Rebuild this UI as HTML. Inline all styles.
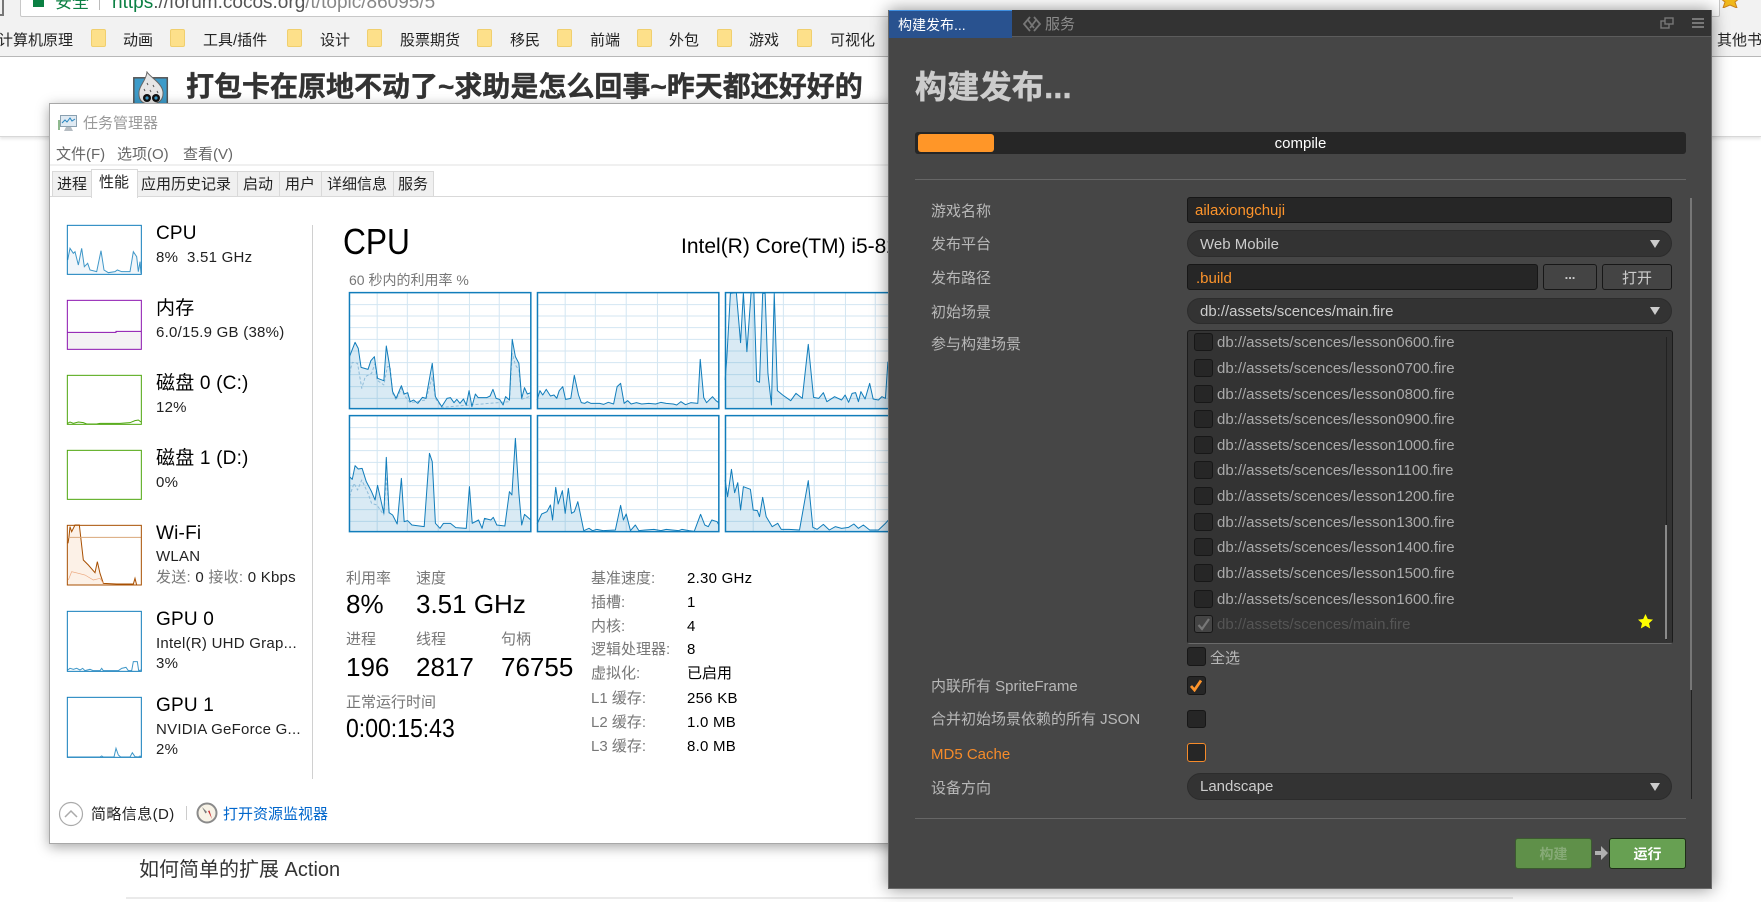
<!DOCTYPE html>
<html lang="zh">
<head>
<meta charset="utf-8">
<title>构建发布</title>
<style>
html,body{margin:0;padding:0;background:#fff;}
body{position:relative;width:1761px;height:902px;overflow:hidden;font-family:"Liberation Sans","Noto Sans CJK SC",sans-serif;}
.t{position:absolute;white-space:nowrap;line-height:20px;height:20px;font-size:15px;margin-top:1px;}
.b{position:absolute;box-sizing:border-box;}
.bm{color:#222;}
.fd{position:absolute;top:29px;width:15px;height:18px;background:#fde08a;border:1px solid #f0cf6e;border-radius:2px;box-sizing:border-box;}
.gr{color:#777;}
.bk{color:#000;}
.hd{font-size:19px;color:#000;letter-spacing:.2px;}
.sb{color:#222;letter-spacing:.25px;}
.lb{color:#b8b8b8;}
.inp{position:absolute;box-sizing:border-box;background:#262626;border:1px solid #171717;border-radius:3px;}
.sel{position:absolute;box-sizing:border-box;background:#333;border:1px solid #2c2c2c;border-radius:14px;left:1187px;width:485px;}
.arr{position:absolute;left:1650px;width:0;height:0;border-left:5px solid transparent;border-right:5px solid transparent;border-top:8px solid #ccc;}
.cb{position:absolute;box-sizing:border-box;width:19px;height:18px;background:#262626;border:1px solid #171717;border-radius:3px;}
.li{color:#aaa;left:1217px;}
</style>
</head>
<body>
<!-- browser chrome -->
<div class="b" style="left:0;top:0;width:1761px;height:57px;background:#f2f2f2;border-bottom:1px solid #b9b9b9;"></div>
<div class="b" style="left:20px;top:-4px;width:1700px;height:21px;background:#fff;border:1px solid #c8c8c8;border-radius:2px;"></div>
<div class="b" style="left:0;top:0;width:4px;height:16px;border-right:2px solid #777;border-bottom:2px solid #777;"></div>
<div class="b" style="left:33px;top:0;width:11px;height:7px;background:#0b8043;"></div>
<div class="t" style="left:55px;top:-8px;font-size:17px;color:#0b8043;">安全</div>
<div class="b" style="left:99px;top:0;width:1px;height:10px;background:#bbb;"></div>
<div class="t" style="left:112px;top:-8px;font-size:19px;"><span style="color:#0b8043;">https</span><span style="color:#555;">://forum.cocos.org</span><span style="color:#888;">/t/topic/86095/5</span></div>

<div class="t bm" style="left:-2px;top:30px;">计算机原理</div>
<div class="fd" style="left:91px;"></div><div class="t bm" style="left:123px;top:30px;">动画</div>
<div class="fd" style="left:170px;"></div><div class="t bm" style="left:203px;top:30px;">工具/插件</div>
<div class="fd" style="left:287px;"></div><div class="t bm" style="left:320px;top:30px;">设计</div>
<div class="fd" style="left:367px;"></div><div class="t bm" style="left:400px;top:30px;">股票期货</div>
<div class="fd" style="left:477px;"></div><div class="t bm" style="left:510px;top:30px;">移民</div>
<div class="fd" style="left:557px;"></div><div class="t bm" style="left:590px;top:30px;">前端</div>
<div class="fd" style="left:637px;"></div><div class="t bm" style="left:669px;top:30px;">外包</div>
<div class="fd" style="left:717px;"></div><div class="t bm" style="left:749px;top:30px;">游戏</div>
<div class="fd" style="left:797px;"></div><div class="t bm" style="left:830px;top:30px;">可视化</div>
<div class="t bm" style="left:1717px;top:30px;">其他书签</div>
<svg style="position:absolute;left:1718px;top:-8px" width="24" height="16" viewBox="0 0 24 16"><polygon points="12,0 15,5 22,6 17,10 19,16 12,13 5,16 7,10 2,6 9,5" fill="#f0b81a" stroke="#c9801e"/></svg>

<!-- forum header -->
<div class="b" style="left:0;top:57px;width:1761px;height:80px;background:#fff;border-bottom:1px solid #d8d8d8;box-shadow:0 2px 3px rgba(0,0,0,.1);"></div>
<svg style="position:absolute;left:133px;top:71px" width="36" height="33" viewBox="0 0 36 33">
<rect x="0.8" y="6.8" width="33.5" height="28" fill="#3d9bc9" stroke="#555" stroke-width="1.5"/>
<path d="M14 1 C17 6 29 12 30 21 C30.5 28 27 33 17 33 C8 33 5.5 28 6 21 C6.5 14 13 10 14 1Z" fill="#e6e6e6" stroke="#666"/>
<path d="M14 12l1 2M20 14l1 2M11 18l1 2M17 19l1 2M24 20l1 2" stroke="#555" stroke-width="1"/>
<circle cx="14" cy="27" r="4" fill="#111"/><circle cx="23" cy="27" r="4" fill="#111"/>
<circle cx="14" cy="27" r="1.6" fill="#3d9bc9"/><circle cx="23" cy="27" r="1.6" fill="#3d9bc9"/>
</svg>
<div class="t" style="left:186px;top:76px;font-size:28px;line-height:20px;font-weight:bold;color:#333;-webkit-text-stroke:.4px #333;">打包卡在原地不动了~求助是怎么回事~昨天都还好好的</div>

<!-- below -->
<div class="t" style="left:139px;top:859px;font-size:20px;color:#333;">如何简单的扩展 Action</div>
<div class="b" style="left:126px;top:897px;width:1387px;height:2px;background:#eaeaea;"></div>

<!-- task manager -->
<div class="b" style="left:49px;top:103px;width:900px;height:741px;background:#fff;border:1px solid #a8a8a8;box-shadow:0 3px 12px rgba(0,0,0,.35);"></div>
<svg style="position:absolute;left:58px;top:114px" width="20" height="18" viewBox="0 0 20 18">
<rect x="2.5" y="1.5" width="16" height="11" fill="#dfeaf3" stroke="#8aa0b0"/>
<path d="M4 9l3-3 2 2 3-4 2 3 3-2" fill="none" stroke="#2a86c0"/>
<rect x="0" y="6" width="2" height="10" fill="#8fb98f"/>
<path d="M8 13h5l2 4H6z" fill="#b5bcc2"/>
</svg>
<div class="t" style="left:83px;top:113px;color:#999;">任务管理器</div>
<div class="t" style="left:56px;top:144px;color:#666;">文件(F)</div>
<div class="t" style="left:117px;top:144px;color:#666;">选项(O)</div>
<div class="t" style="left:183px;top:144px;color:#666;">查看(V)</div>
<div class="b" style="left:50px;top:164px;width:840px;height:2px;background:#f0f0f0;"></div>
<div class="b" style="left:50px;top:196px;width:840px;height:1px;background:#d9d9d9;"></div>
<div class="b" style="left:52px;top:171px;width:40px;height:25px;background:#f0f0f0;border:1px solid #d9d9d9;border-bottom:0;"></div>
<div class="b" style="left:137px;top:171px;width:101px;height:25px;background:#f0f0f0;border:1px solid #d9d9d9;border-bottom:0;"></div>
<div class="b" style="left:237px;top:171px;width:43px;height:25px;background:#f0f0f0;border:1px solid #d9d9d9;border-bottom:0;"></div>
<div class="b" style="left:279px;top:171px;width:43px;height:25px;background:#f0f0f0;border:1px solid #d9d9d9;border-bottom:0;"></div>
<div class="b" style="left:321px;top:171px;width:73px;height:25px;background:#f0f0f0;border:1px solid #d9d9d9;border-bottom:0;"></div>
<div class="b" style="left:393px;top:171px;width:41px;height:25px;background:#f0f0f0;border:1px solid #d9d9d9;border-bottom:0;"></div>
<div class="b" style="left:91px;top:169px;width:47px;height:29px;background:#fff;border:1px solid #d9d9d9;border-bottom:0;"></div>
<div class="t" style="left:57px;top:174px;color:#222;">进程</div>
<div class="t" style="left:99px;top:172px;color:#222;">性能</div>
<div class="t" style="left:141px;top:174px;color:#222;">应用历史记录</div>
<div class="t" style="left:243px;top:174px;color:#222;">启动</div>
<div class="t" style="left:285px;top:174px;color:#222;">用户</div>
<div class="t" style="left:327px;top:174px;color:#222;">详细信息</div>
<div class="t" style="left:398px;top:174px;color:#222;">服务</div>

<!-- sidebar graphs -->
<svg style="position:absolute;left:40px;top:210px" width="300" height="690" viewBox="0 0 900 2070" preserveAspectRatio="none">
<g fill="none">
<polygon points="83,150 90,115 100,130 105,125 115,165 125,115 133,170 143,160 150,180 170,185 183,122 192,180 205,188 225,185 232,180 245,185 270,185 280,125 290,140 295,185 300,155 303,190 83,192" fill="#f1f6fa"/>
<polyline points="83,150 90,115 100,130 105,125 115,165 125,115 133,170 143,160 150,180 170,185 183,122 192,180 205,188 225,185 232,180 245,185 270,185 280,125 290,140 295,185 300,155 303,190" stroke="#3f97c8" stroke-width="3"/>
<rect x="82" y="46" width="222" height="147" stroke="#117dbb" stroke-width="3"/>
<rect x="83" y="366" width="220" height="52" fill="#f4f2f4"/>
<polyline points="83,367 228,367 228,364 303,364" stroke="#8b12ae" stroke-width="3"/>
<rect x="82" y="271" width="222" height="147" stroke="#8b12ae" stroke-width="3"/>
<polyline points="83,640 90,636 100,640 115,636 130,638 140,642 170,642 180,640 240,640 270,638 285,632 295,630 303,636" stroke="#4da60c" stroke-width="3"/>
<rect x="82" y="496" width="222" height="147" stroke="#4da60c" stroke-width="3"/>
<rect x="82" y="721" width="222" height="147" stroke="#4da60c" stroke-width="3"/>
<polygon points="84,990 90,950 95,965 105,945 118,945 130,1050 145,1065 165,1088 172,1055 180,1090 190,1120 230,1122 280,1122 285,1105 290,1125 84,1125" fill="#fcf1e7"/>
<polyline points="84,1000 87,980 90,950 95,965 105,945 118,945 130,1050 145,1065 165,1088 172,1055 180,1090 190,1120 230,1122 280,1122 285,1105 290,1125" stroke="#a74f01" stroke-width="3"/>
<polyline points="85,1110 95,1085 115,1090 135,1095 160,1110 180,1105 190,1120" stroke="#eba57a" stroke-width="2"/>
<line x1="83" y1="982" x2="303" y2="982" stroke="#d9a77a" stroke-width="3"/>
<rect x="82" y="946" width="222" height="179" stroke="#a74f01" stroke-width="3"/>
<polyline points="83,1380 90,1375 100,1378 110,1375 120,1380 128,1375 135,1382 150,1378 160,1382 180,1382 185,1375 190,1382 235,1382 245,1375 258,1372 265,1382 275,1382 280,1355 292,1355 296,1382 303,1380" stroke="#3f97c8" stroke-width="3"/>
<rect x="82" y="1204" width="222" height="180" stroke="#117dbb" stroke-width="3"/>
<polyline points="83,1641 180,1641 185,1638 190,1641 222,1641 228,1615 235,1635 242,1641 270,1641 277,1628 285,1640 295,1641 300,1638 303,1641" stroke="#3f97c8" stroke-width="3"/>
<rect x="82" y="1462" width="222" height="180" stroke="#117dbb" stroke-width="3"/>
</g>
</svg>
<div class="t hd" style="left:156px;top:223px;">CPU</div>
<div class="t sb" style="left:156px;top:247px;">8%&nbsp; 3.51 GHz</div>
<div class="t hd" style="left:156px;top:298px;">内存</div>
<div class="t sb" style="left:156px;top:322px;">6.0/15.9 GB (38%)</div>
<div class="t hd" style="left:156px;top:373px;">磁盘 0 (C:)</div>
<div class="t sb" style="left:156px;top:397px;">12%</div>
<div class="t hd" style="left:156px;top:448px;">磁盘 1 (D:)</div>
<div class="t sb" style="left:156px;top:472px;">0%</div>
<div class="t hd" style="left:156px;top:523px;">Wi-Fi</div>
<div class="t sb" style="left:156px;top:546px;">WLAN</div>
<div class="t sb" style="left:156px;top:567px;"><span class="gr">发送:</span> 0 <span class="gr">接收:</span> 0 Kbps</div>
<div class="t hd" style="left:156px;top:609px;">GPU 0</div>
<div class="t sb" style="left:156px;top:633px;">Intel(R) UHD Grap...</div>
<div class="t sb" style="left:156px;top:653px;">3%</div>
<div class="t hd" style="left:156px;top:695px;">GPU 1</div>
<div class="t sb" style="left:156px;top:719px;">NVIDIA GeForce G...</div>
<div class="t sb" style="left:156px;top:739px;">2%</div>
<div class="b" style="left:312px;top:225px;width:1px;height:554px;background:#d0d0d0;"></div>

<!-- footer -->
<svg style="position:absolute;left:58px;top:801px" width="26" height="26" viewBox="0 0 26 26"><circle cx="13" cy="13" r="11.5" fill="none" stroke="#aaa" stroke-width="1.2"/><path d="M7 16l6-6 6 6" fill="none" stroke="#aaa" stroke-width="1.5"/></svg>
<div class="t" style="left:91px;top:804px;color:#222;letter-spacing:.4px;">简略信息(D)</div>
<div class="b" style="left:186px;top:806px;width:1px;height:14px;background:#ccc;"></div>
<svg style="position:absolute;left:196px;top:802px" width="22" height="22" viewBox="0 0 22 22"><circle cx="11" cy="11" r="9.5" fill="#f7f2e6" stroke="#8a8a8a" stroke-width="2"/><path d="M6 5l5 5-1.5 1.5z" fill="#777"/><path d="M12 9l1.5-.5L16 17z" fill="#c62828"/></svg>
<div class="t" style="left:223px;top:804px;color:#0066cc;">打开资源监视器</div>

<!-- CPU main -->
<div class="t" style="left:343px;top:231px;font-size:36px;color:#000;transform:scaleX(.88);transform-origin:0 50%;">CPU</div>
<div class="t" style="left:681px;top:236px;font-size:21px;color:#000;">Intel(R) Core(TM) i5-8250U CPU @ 1.60GHz</div>
<div class="t" style="left:349px;top:269px;font-size:14px;color:#777;">60 秒内的利用率 %</div>

<svg style="position:absolute;left:340px;top:210px" width="550" height="330" viewBox="0 0 1568 990" preserveAspectRatio="none">
<defs>
<g id="g1" stroke="#d3e6f2" stroke-width="1" fill="none">
<path vector-effect="non-scaling-stroke" d="M106 248V596M192 248V596M280 248V596M369 248V596M454 248V596M27 284H544M27 318H544M27 353H544M27 388H544M27 423H544M27 458H544M27 494H544M27 530H544M27 565H544"/>
</g>
</defs>
<rect x="27" y="248" width="517" height="348" fill="#fff"/>
<use href="#g1"/><use href="#g1" x="536"/><use href="#g1" x="1072"/>
<use href="#g1" y="369"/><use href="#g1" x="536" y="369"/><use href="#g1" x="1072" y="369"/>
<g stroke-linejoin="round">
<!-- chart 1 -->
<polygon fill="#117dbb" fill-opacity=".16" points="27,440 43,397 52,415 60,472 80,478 88,452 98,440 107,505 125,512 132,408 141,465 150,545 160,565 175,527 183,552 193,548 200,575 210,570 222,580 235,562 245,565 263,460 272,560 290,590 305,565 315,563 325,578 333,568 342,580 352,567 360,585 368,542 376,590 386,552 394,563 418,563 428,558 436,538 445,565 455,568 465,585 472,560 483,570 491,388 500,440 510,460 518,565 526,533 534,552 544,548 544,596 27,596"/>
<polyline vector-effect="non-scaling-stroke" fill="none" stroke="#8fbcd9" stroke-dasharray="3 2" points="27,490 35,457 50,460 62,535 72,500 90,490 100,460 105,510 125,525 135,470 143,470 150,550 160,570 175,535 183,556 200,578 245,570 263,500 272,565 290,592 483,575 491,430 500,465 510,480 518,568 544,558"/>
<polyline vector-effect="non-scaling-stroke" fill="none" stroke="#117dbb" points="27,440 43,397 52,415 60,472 80,478 88,452 98,440 107,505 125,512 132,408 141,465 150,545 160,565 175,527 183,552 193,548 200,575 210,570 222,580 235,562 245,565 263,460 272,560 290,590 305,565 315,563 325,578 333,568 342,580 352,567 360,585 368,542 376,590 386,552 394,563 418,563 428,558 436,538 445,565 455,568 465,585 472,560 483,570 491,388 500,440 510,460 518,565 526,533 534,552 544,548"/>
<!-- chart 2 -->
<polygon fill="#117dbb" fill-opacity=".16" points="562,570 570,542 578,555 588,538 600,558 610,555 618,565 625,542 635,530 643,568 658,565 668,496 680,555 688,578 698,580 705,575 715,580 740,580 752,583 765,577 780,582 790,530 800,520 810,580 820,572 830,582 845,578 860,582 880,580 900,582 915,577 930,580 950,582 960,585 972,575 985,584 1000,578 1020,580 1027,448 1037,563 1045,578 1062,560 1072,572 1080,578 1080,596 562,596"/>
<polyline vector-effect="non-scaling-stroke" fill="none" stroke="#117dbb" points="562,570 570,542 578,555 588,538 600,558 610,555 618,565 625,542 635,530 643,568 658,565 668,496 680,555 688,578 698,580 705,575 715,580 740,580 752,583 765,577 780,582 790,530 800,520 810,580 820,572 830,582 845,578 860,582 880,580 900,582 915,577 930,580 950,582 960,585 972,575 985,584 1000,578 1020,580 1027,448 1037,563 1045,578 1062,560 1072,572 1080,578"/>
<!-- chart 3 -->
<polygon fill="#117dbb" fill-opacity=".16" points="1098,510 1103,440 1113,250 1130,248 1142,398 1150,248 1160,425 1172,248 1180,248 1188,513 1196,517 1205,250 1212,250 1220,490 1230,585 1238,250 1247,542 1262,555 1285,572 1300,550 1318,565 1335,403 1350,562 1365,565 1378,548 1388,575 1410,560 1430,570 1440,555 1450,577 1460,550 1470,548 1478,575 1485,545 1497,567 1510,520 1520,567 1535,570 1545,560 1555,565 1562,455 1568,596 1098,596"/>
<polyline vector-effect="non-scaling-stroke" fill="none" stroke="#117dbb" points="1098,510 1103,440 1113,250 1130,248 1142,398 1150,248 1160,425 1172,248 1180,248 1188,513 1196,517 1205,250 1212,250 1220,490 1230,585 1238,250 1247,542 1262,555 1285,572 1300,550 1318,565 1335,403 1350,562 1365,565 1378,548 1388,575 1410,560 1430,570 1440,555 1450,577 1460,550 1470,548 1478,575 1485,545 1497,567 1510,520 1520,567 1535,570 1545,560 1555,565 1562,455"/>
<!-- chart 4 -->
<polygon fill="#117dbb" fill-opacity=".16" points="27,800 35,808 43,767 52,777 63,775 75,815 90,845 100,870 107,826 125,910 132,742 140,908 150,915 163,942 175,805 183,935 193,932 205,945 240,950 255,730 263,755 272,940 285,955 295,940 315,940 330,953 360,955 369,830 377,940 395,930 405,955 412,925 430,930 437,922 447,945 470,948 483,845 490,855 500,685 510,850 518,945 526,913 544,930 544,965 27,965"/>
<polyline vector-effect="non-scaling-stroke" fill="none" stroke="#8fbcd9" stroke-dasharray="3 2" points="27,860 40,820 50,840 62,810 80,850 90,880 105,885 125,915 132,800 140,910"/>
<polyline vector-effect="non-scaling-stroke" fill="none" stroke="#117dbb" points="27,800 35,808 43,767 52,777 63,775 75,815 90,845 100,870 107,826 125,910 132,742 140,908 150,915 163,942 175,805 183,935 193,932 205,945 240,950 255,730 263,755 272,940 285,955 295,940 315,940 330,953 360,955 369,830 377,940 395,930 405,955 412,925 430,930 437,922 447,945 470,948 483,845 490,855 500,685 510,850 518,945 526,913 544,930"/>
<!-- chart 5 -->
<polygon fill="#117dbb" fill-opacity=".16" points="562,942 575,912 590,905 600,885 606,930 615,832 622,882 634,842 642,910 651,835 660,910 668,905 678,875 695,962 710,955 720,962 732,958 750,962 785,960 800,886 808,930 816,912 828,962 842,945 852,962 870,960 895,958 915,962 930,958 965,962 975,958 995,962 1010,964 1028,913 1040,945 1050,950 1060,930 1075,935 1080,945 1080,965 562,965"/>
<polyline vector-effect="non-scaling-stroke" fill="none" stroke="#117dbb" points="562,942 575,912 590,905 600,885 606,930 615,832 622,882 634,842 642,910 651,835 660,910 668,905 678,875 695,962 710,955 720,962 732,958 750,962 785,960 800,886 808,930 816,912 828,962 842,945 852,962 870,960 895,958 915,962 930,958 965,962 975,958 995,962 1010,964 1028,913 1040,945 1050,950 1060,930 1075,935 1080,945"/>
<!-- chart 6 -->
<polygon fill="#117dbb" fill-opacity=".16" points="1098,810 1105,860 1116,778 1125,848 1134,818 1142,900 1150,830 1170,838 1178,900 1190,902 1196,920 1205,862 1215,920 1232,950 1248,940 1258,958 1280,958 1310,960 1335,812 1348,952 1360,958 1378,943 1395,960 1412,950 1430,955 1450,952 1465,942 1478,955 1492,945 1510,960 1535,960 1555,940 1568,925 1568,965 1098,965"/>
<polyline vector-effect="non-scaling-stroke" fill="none" stroke="#117dbb" points="1098,810 1105,860 1116,778 1125,848 1134,818 1142,900 1150,830 1170,838 1178,900 1190,902 1196,920 1205,862 1215,920 1232,950 1248,940 1258,958 1280,958 1310,960 1335,812 1348,952 1360,958 1378,943 1395,960 1412,950 1430,955 1450,952 1465,942 1478,955 1492,945 1510,960 1535,960 1555,940 1568,925"/>
</g>
<g fill="none" stroke="#117dbb" stroke-width="1.5">
<rect vector-effect="non-scaling-stroke" x="27" y="248" width="517" height="348"/>
<rect vector-effect="non-scaling-stroke" x="563" y="248" width="517" height="348"/>
<rect vector-effect="non-scaling-stroke" x="1099" y="248" width="517" height="348"/>
<rect vector-effect="non-scaling-stroke" x="27" y="617" width="517" height="348"/>
<rect vector-effect="non-scaling-stroke" x="563" y="617" width="517" height="348"/>
<rect vector-effect="non-scaling-stroke" x="1099" y="617" width="517" height="348"/>
</g>
</svg>

<!-- stats -->
<div class="t gr" style="left:346px;top:568px;">利用率</div>
<div class="t gr" style="left:416px;top:568px;">速度</div>
<div class="t bk" style="left:346px;top:593px;font-size:26px;">8%</div>
<div class="t bk" style="left:416px;top:593px;font-size:26px;">3.51 GHz</div>
<div class="t gr" style="left:346px;top:629px;">进程</div>
<div class="t gr" style="left:416px;top:629px;">线程</div>
<div class="t gr" style="left:501px;top:629px;">句柄</div>
<div class="t bk" style="left:346px;top:656px;font-size:26px;">196</div>
<div class="t bk" style="left:416px;top:656px;font-size:26px;">2817</div>
<div class="t bk" style="left:501px;top:656px;font-size:26px;">76755</div>
<div class="t gr" style="left:346px;top:692px;">正常运行时间</div>
<div class="t bk" style="left:346px;top:717px;font-size:26px;transform:scaleX(.885);transform-origin:0 50%;">0:00:15:43</div>

<div class="t gr" style="left:591px;top:568px;">基准速度:</div><div class="t bk" style="left:687px;top:568px;letter-spacing:.25px;">2.30 GHz</div>
<div class="t gr" style="left:591px;top:592px;">插槽:</div><div class="t bk" style="left:687px;top:592px;">1</div>
<div class="t gr" style="left:591px;top:616px;">内核:</div><div class="t bk" style="left:687px;top:616px;">4</div>
<div class="t gr" style="left:591px;top:639px;">逻辑处理器:</div><div class="t bk" style="left:687px;top:639px;">8</div>
<div class="t gr" style="left:591px;top:663px;">虚拟化:</div><div class="t bk" style="left:687px;top:663px;">已启用</div>
<div class="t gr" style="left:591px;top:688px;">L1 缓存:</div><div class="t bk" style="left:687px;top:688px;letter-spacing:.25px;">256 KB</div>
<div class="t gr" style="left:591px;top:712px;">L2 缓存:</div><div class="t bk" style="left:687px;top:712px;letter-spacing:.25px;">1.0 MB</div>
<div class="t gr" style="left:591px;top:736px;">L3 缓存:</div><div class="t bk" style="left:687px;top:736px;letter-spacing:.25px;">8.0 MB</div>

<!-- dark panel -->
<div class="b" style="left:888px;top:10px;width:824px;height:879px;background:#464646;border:1px solid #6a6a6a;border-top:0;box-shadow:0 0 16px rgba(0,0,0,.45);"></div>
<div class="b" style="left:889px;top:10px;width:822px;height:27px;background:#333;border-bottom:1px solid #5c5c5c;"></div>
<div class="b" style="left:889px;top:10px;width:123px;height:28px;background:#29528f;border-top:1px solid #3f8fe0;"></div>
<div class="t" style="left:898px;top:14px;font-size:14px;color:#fff;">构建发布...</div>
<svg style="position:absolute;left:1022px;top:15px" width="20" height="18" viewBox="0 0 20 18"><path d="M8 2L2 9l6 7M12 2l6 7-6 7M6 5l6 8M14 5L8 13" fill="none" stroke="#777" stroke-width="1.8"/></svg>
<div class="t" style="left:1045px;top:14px;color:#8c8c8c;">服务</div>
<svg style="position:absolute;left:1660px;top:16px" width="14" height="14" viewBox="0 0 14 14"><rect x="1" y="5" width="8" height="7" fill="none" stroke="#777" stroke-width="1.4"/><rect x="5" y="2" width="8" height="6" fill="#333" stroke="#777" stroke-width="1.4"/></svg>
<div class="b" style="left:1692px;top:18px;width:12px;height:2px;background:#777;"></div>
<div class="b" style="left:1692px;top:22px;width:12px;height:2px;background:#777;"></div>
<div class="b" style="left:1692px;top:26px;width:12px;height:2px;background:#777;"></div>

<div class="t" style="left:915px;top:76px;font-size:32px;font-weight:bold;color:#ccc;-webkit-text-stroke:.5px #ccc;letter-spacing:.3px;">构建发布...</div>

<div class="b" style="left:915px;top:132px;width:771px;height:22px;background:#262626;border-radius:3px;"></div>
<div class="b" style="left:918px;top:134px;width:76px;height:18px;background:#ff9628;border-radius:3px;"></div>
<div class="t" style="left:1150px;width:301px;text-align:center;top:133px;font-size:15px;color:#fff;">compile</div>
<div class="b" style="left:915px;top:179px;width:771px;height:1px;background:#666;"></div>

<div class="t lb" style="left:931px;top:201px;">游戏名称</div>
<div class="inp" style="left:1187px;top:197px;width:485px;height:26px;"></div>
<div class="t" style="left:1195px;top:200px;color:#fd942b;">ailaxiongchuji</div>

<div class="t lb" style="left:931px;top:234px;">发布平台</div>
<div class="sel" style="top:230px;height:27px;"></div>
<div class="t" style="left:1200px;top:234px;color:#ccc;">Web Mobile</div>
<div class="arr" style="top:240px;"></div>

<div class="t lb" style="left:931px;top:268px;">发布路径</div>
<div class="inp" style="left:1187px;top:264px;width:351px;height:26px;"></div>
<div class="t" style="left:1196px;top:268px;color:#fd942b;">.build</div>
<div class="inp" style="left:1543px;top:264px;width:54px;height:26px;background:#444;"></div>
<div class="t" style="left:1543px;width:54px;text-align:center;top:264px;color:#ccc;font-size:13px;font-weight:bold;">...</div>
<div class="inp" style="left:1602px;top:264px;width:70px;height:26px;background:#444;"></div>
<div class="t" style="left:1602px;width:70px;text-align:center;top:268px;color:#ccc;">打开</div>

<div class="t lb" style="left:931px;top:302px;">初始场景</div>
<div class="sel" style="top:298px;height:26px;"></div>
<div class="t" style="left:1200px;top:301px;color:#ccc;">db://assets/scences/main.fire</div>
<div class="arr" style="top:307px;"></div>

<div class="t lb" style="left:931px;top:334px;">参与构建场景</div>
<div class="b" style="left:1187px;top:330px;width:486px;height:314px;background:#333;border:1px solid #1c1c1c;border-bottom:1px solid #6a6a6a;border-radius:3px;"></div>
<div class="cb" style="left:1194px;top:333px;"></div><div class="t li" style="top:332px;">db://assets/scences/lesson0600.fire</div>
<div class="cb" style="left:1194px;top:359px;"></div><div class="t li" style="top:358px;">db://assets/scences/lesson0700.fire</div>
<div class="cb" style="left:1194px;top:385px;"></div><div class="t li" style="top:384px;">db://assets/scences/lesson0800.fire</div>
<div class="cb" style="left:1194px;top:410px;"></div><div class="t li" style="top:409px;">db://assets/scences/lesson0900.fire</div>
<div class="cb" style="left:1194px;top:436px;"></div><div class="t li" style="top:435px;">db://assets/scences/lesson1000.fire</div>
<div class="cb" style="left:1194px;top:461px;"></div><div class="t li" style="top:460px;">db://assets/scences/lesson1100.fire</div>
<div class="cb" style="left:1194px;top:487px;"></div><div class="t li" style="top:486px;">db://assets/scences/lesson1200.fire</div>
<div class="cb" style="left:1194px;top:513px;"></div><div class="t li" style="top:512px;">db://assets/scences/lesson1300.fire</div>
<div class="cb" style="left:1194px;top:538px;"></div><div class="t li" style="top:537px;">db://assets/scences/lesson1400.fire</div>
<div class="cb" style="left:1194px;top:564px;"></div><div class="t li" style="top:563px;">db://assets/scences/lesson1500.fire</div>
<div class="cb" style="left:1194px;top:590px;"></div><div class="t li" style="top:589px;">db://assets/scences/lesson1600.fire</div>
<div class="cb" style="left:1194px;top:615px;background:#444;"></div>
<svg style="position:absolute;left:1197px;top:618px" width="14" height="13" viewBox="0 0 14 13"><path d="M1.5 7l3.5 4 7-10" fill="none" stroke="#777" stroke-width="2.2"/></svg>
<div class="t li" style="top:614px;color:#555;">db://assets/scences/main.fire</div>
<svg style="position:absolute;left:1638px;top:614px" width="15" height="15" viewBox="0 0 15 15"><polygon points="7.5,0 9.8,5 15,5.6 11,9.2 12.2,14.5 7.5,11.8 2.8,14.5 4,9.2 0,5.6 5.2,5" fill="#ff0"/></svg>
<div class="b" style="left:1666px;top:337px;width:1px;height:303px;background:#222;"></div>
<div class="b" style="left:1665px;top:525px;width:2px;height:114px;background:#8a8a8a;"></div>

<div class="cb" style="left:1187px;top:647px;height:19px;"></div>
<div class="t lb" style="left:1210px;top:648px;">全选</div>

<div class="t lb" style="left:931px;top:676px;">内联所有 SpriteFrame</div>
<div class="cb" style="left:1187px;top:676px;height:19px;"></div>
<svg style="position:absolute;left:1189px;top:679px" width="15" height="13" viewBox="0 0 15 13"><path d="M2 7l3.5 4L12 1.5" fill="none" stroke="#fd942b" stroke-width="2.8"/></svg>

<div class="t lb" style="left:931px;top:709px;">合并初始场景依赖的所有 JSON</div>
<div class="cb" style="left:1187px;top:710px;"></div>

<div class="t" style="left:931px;top:744px;color:#f68b2a;">MD5 Cache</div>
<div class="cb" style="left:1187px;top:743px;height:19px;border-color:#f68b2a;"></div>

<div class="t lb" style="left:931px;top:778px;">设备方向</div>
<div class="sel" style="top:773px;height:27px;"></div>
<div class="t" style="left:1200px;top:776px;color:#ccc;">Landscape</div>
<div class="arr" style="top:783px;"></div>

<div class="b" style="left:1691px;top:198px;width:1px;height:601px;background:#222;"></div>
<div class="b" style="left:1690px;top:198px;width:2px;height:492px;background:#777;"></div>

<div class="b" style="left:915px;top:818px;width:771px;height:1px;background:#666;"></div>
<div class="b" style="left:1515px;top:838px;width:77px;height:31px;background:#5f9049;border:1px solid #3c5a30;border-radius:3px;"></div>
<div class="t" style="left:1515px;width:77px;text-align:center;top:843px;font-weight:bold;font-size:14px;color:#86aa76;">构建</div>
<svg style="position:absolute;left:1595px;top:845px" width="14" height="16" viewBox="0 0 14 16"><path d="M0 6h6V1l7 7-7 7v-5H0z" fill="#b0b0b0"/></svg>
<div class="b" style="left:1609px;top:838px;width:77px;height:31px;background:#67a052;border:1px solid #1e2e18;border-radius:3px;"></div>
<div class="t" style="left:1609px;width:77px;text-align:center;top:843px;font-weight:bold;font-size:14px;color:#fff;">运行</div>
</body>
</html>
